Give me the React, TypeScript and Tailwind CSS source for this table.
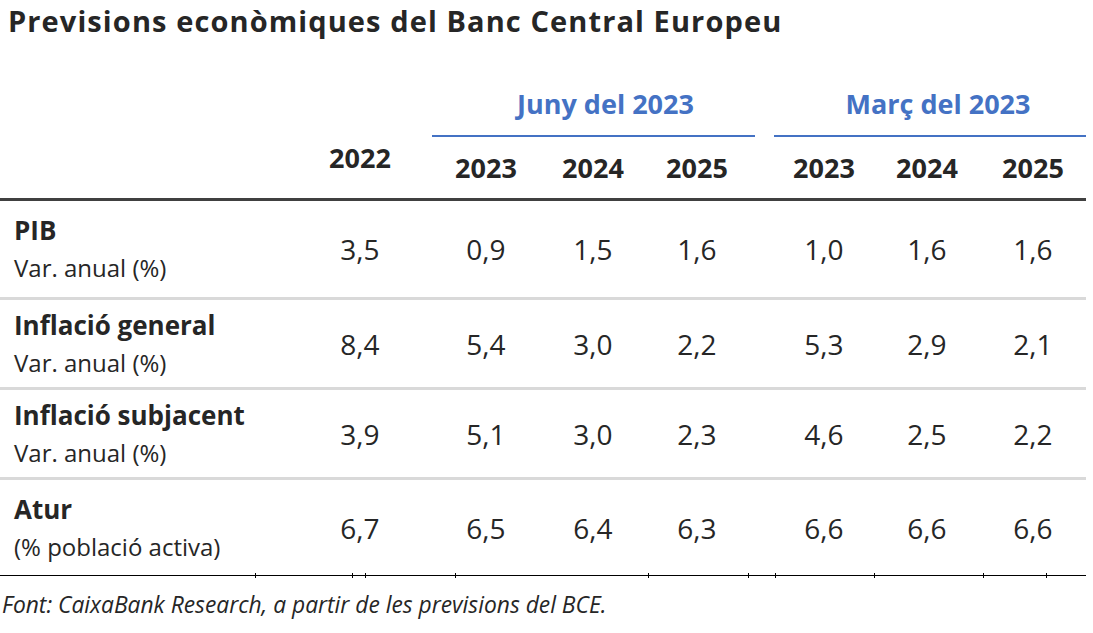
const juny = ['2023', '2024', '2025']
const marc = ['2023', '2024', '2025']

type Row = {
  title: string
  sub: string
  values: string[]
  h: string
  sep: boolean
}

const rows: Row[] = [
  { title: 'PIB', sub: 'Var. anual (%)', values: ['3,5', '0,9', '1,5', '1,6', '1,0', '1,6', '1,6'], h: 'h-[99px]', sep: true },
  { title: 'Inflació general', sub: 'Var. anual (%)', values: ['8,4', '5,4', '3,0', '2,2', '5,3', '2,9', '2,1'], h: 'h-[90px]', sep: true },
  { title: 'Inflació subjacent', sub: 'Var. anual (%)', values: ['3,9', '5,1', '3,0', '2,3', '4,6', '2,5', '2,2'], h: 'h-[90px]', sep: true },
  { title: 'Atur', sub: '(% població activa)', values: ['6,7', '6,5', '6,4', '6,3', '6,6', '6,6', '6,6'], h: 'h-[95px]', sep: false },
]

// amplades de les columnes de valors
const colW = ['w-[108px]', 'w-[106px]', 'w-[102px]']
const colW2 = ['w-[100px]', 'w-[106px]', 'w-[106px]']

const ticks = [255, 352, 365, 455, 648, 748, 775, 874, 983, 1046]

export default function App() {
  return (
    <div className="w-[1093px] h-[633px] bg-white text-[#262626] [font-family:'Open_Sans',sans-serif] overflow-hidden">
      {/* títol */}
      <div className="h-[60px] pl-[8px] pt-[2px]">
        <h1 className="text-[29px] font-bold leading-[37px] tracking-[1.1px]">
          Previsions econòmiques del Banc Central Europeu
        </h1>
      </div>

      {/* capçalera */}
      <div className="w-[1086px] h-[141px] flex border-b-[3px] border-[#404040]">
        <div className="w-[305px]" />
        <div className="w-[110px] flex items-end justify-center pb-[24px]">
          <span className="text-[27px] font-bold leading-[32px]">2022</span>
        </div>
        <div className="w-[17px]" />

        <div className="w-[323px] flex flex-col">
          <div className="h-[75px] pt-[13px] flex items-center justify-center pl-[24px]">
            <span className="text-[27px] font-bold text-[#4472C4] leading-[32px]">Juny del 2023</span>
          </div>
          <div className="h-[2px] bg-[#4472C4]" />
          <div className="h-[61px] flex items-center">
            {juny.map((y, i) => (
              <div key={i} className={`${colW[i]} text-center text-[27px] font-bold leading-[32px]`}>
                {y}
              </div>
            ))}
          </div>
        </div>

        <div className="w-[19px]" />

        <div className="w-[312px] flex flex-col">
          <div className="h-[75px] pt-[13px] flex items-center justify-center pl-[16px]">
            <span className="text-[27px] font-bold text-[#4472C4] leading-[32px]">Març del 2023</span>
          </div>
          <div className="h-[2px] bg-[#4472C4]" />
          <div className="h-[61px] flex items-center">
            {marc.map((y, i) => (
              <div key={i} className={`${colW2[i]} text-center text-[27px] font-bold leading-[32px]`}>
                {y}
              </div>
            ))}
          </div>
        </div>
      </div>

      {/* files */}
      {rows.map((r) => (
        <div
          key={r.title}
          className={`w-[1086px] flex items-center ${r.h} ${r.sep ? 'border-b-[3px] border-[#d9d9d9]' : ''}`}
        >
          <div className="w-[305px] pl-[14px] flex flex-col">
            <span className="text-[26px] font-bold leading-[38px]">{r.title}</span>
            <span className="text-[24px] leading-[38px]">{r.sub}</span>
          </div>
          <div className="w-[110px] text-center text-[28px] leading-[32px]">{r.values[0]}</div>
          <div className="w-[17px]" />
          {r.values.slice(1, 4).map((v, i) => (
            <div key={i} className={`${colW[i]} text-center text-[28px] leading-[32px]`}>
              {v}
            </div>
          ))}
          <div className="w-[26px]" />
          {r.values.slice(4).map((v, i) => (
            <div key={i} className={`${colW2[i]} text-center text-[28px] leading-[32px]`}>
              {v}
            </div>
          ))}
        </div>
      ))}

      {/* línia final amb marques */}
      <div className="relative w-[1086px] h-[1px] bg-black">
        {ticks.map((x) => (
          <span key={x} className="absolute top-[-2px] w-[1px] h-[5px] bg-black" style={{ left: x }} />
        ))}
      </div>

      <p className="pl-[2px] pt-[14px] text-[22.8px] italic leading-[30px]">
        Font: CaixaBank Research, a partir de les previsions del BCE.
      </p>
    </div>
  )
}
